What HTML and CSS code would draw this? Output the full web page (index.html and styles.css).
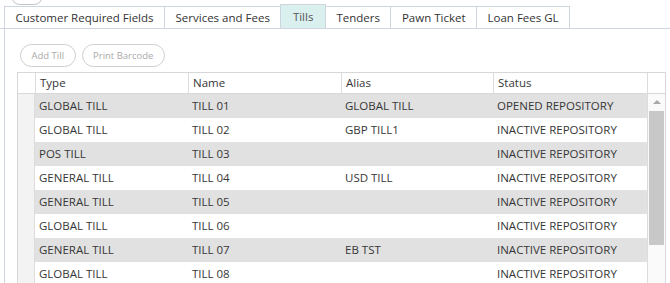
FILE: index.html
```html
<!DOCTYPE html>
<html lang="en">
<head>
    <meta charset="UTF-8">
    <meta name="viewport" content="width=device-width, initial-scale=1.0">
    <title>Tills</title>
    <link rel="stylesheet" href="styles.css">
</head>
<body>
    <div class="top-btn"></div>

    <div class="tabs">
        <div class="tab">Customer Required Fields</div>
        <div class="tab">Services and Fees</div>
        <div class="tab active">Tills</div>
        <div class="tab">Tenders</div>
        <div class="tab">Pawn Ticket</div>
        <div class="tab">Loan Fees GL</div>
    </div>

    <div class="panel">
        <div class="toolbar">
            <button class="pill" disabled>Add Till</button>
            <button class="pill" disabled>Print Barcode</button>
        </div>

        <div class="grid">
            <div class="grid-head">
                <div class="cell ind"></div>
                <div class="cell">Type</div>
                <div class="cell">Name</div>
                <div class="cell">Alias</div>
                <div class="cell">Status</div>
                <div class="cell corner"></div>
            </div>
            <div class="grid-body">
                <div class="rows">
                    <div class="row alt"><div class="ind"></div><div>GLOBAL TILL</div><div>TILL 01</div><div>GLOBAL TILL</div><div>OPENED REPOSITORY</div></div>
                    <div class="row"><div class="ind"></div><div>GLOBAL TILL</div><div>TILL 02</div><div>GBP TILL1</div><div>INACTIVE REPOSITORY</div></div>
                    <div class="row alt"><div class="ind"></div><div>POS TILL</div><div>TILL 03</div><div></div><div>INACTIVE REPOSITORY</div></div>
                    <div class="row"><div class="ind"></div><div>GENERAL TILL</div><div>TILL 04</div><div>USD TILL</div><div>INACTIVE REPOSITORY</div></div>
                    <div class="row alt"><div class="ind"></div><div>GENERAL TILL</div><div>TILL 05</div><div></div><div>INACTIVE REPOSITORY</div></div>
                    <div class="row"><div class="ind"></div><div>GLOBAL TILL</div><div>TILL 06</div><div></div><div>INACTIVE REPOSITORY</div></div>
                    <div class="row alt"><div class="ind"></div><div>GENERAL TILL</div><div>TILL 07</div><div>EB TST</div><div>INACTIVE REPOSITORY</div></div>
                    <div class="row"><div class="ind"></div><div>GLOBAL TILL</div><div>TILL 08</div><div></div><div>INACTIVE REPOSITORY</div></div>
                </div>
                <div class="vscroll">
                    <div class="arrow-up"></div>
                    <div class="thumb"></div>
                </div>
            </div>
        </div>
    </div>
</body>
</html>
```

FILE: styles.css
```css
html, body {
    height: 283px;
    overflow: hidden;
}

body {
    font-family: 'Open Sans', 'Noto Sans', sans-serif;
    font-size: 11.5px;
    color: #363636;
    background-color: #fff;
    margin: 0;
    padding: 0;
}

.top-btn {
    width: 30px;
    height: 20px;
    margin: -17px 0 0 11px;
    border: 1px solid #c4c4c4;
    border-radius: 9px;
}

.tabs {
    display: flex;
    align-items: flex-end;
    padding-left: 4px;
    height: 23px;
    border-bottom: 1px solid #cfd5de;
}

.tab {
    height: 21px;
    line-height: 21px;
    padding: 0 10.5px;
    border: 1px solid #cfd5de;
    border-bottom: none;
    margin-right: -1px;
    color: #333;
}

.tab.active {
    height: 23px;
    line-height: 24px;
    padding: 0 11.5px;
    background-color: #d9f0ef;
    color: #555;
}

.panel {
    margin-left: 4px;
    border-left: 1px solid #cfd5de;
    padding: 15px 0 0 12px;
}

.toolbar {
    display: flex;
    gap: 6px;
    margin-left: 3px;
    margin-bottom: 5px;
}

.pill {
    font-family: 'Open Sans', 'Noto Sans', sans-serif;
    font-size: 9.5px;
    height: 23px;
    padding: 0 10.5px;
    border: 1px solid #cfcfcf;
    border-radius: 12px;
    background-color: #fff;
    color: #aaa;
}

.grid {
    width: 647px;
    border: 1px solid #d8d8d8;
    border-bottom: none;
}

.grid-head {
    display: grid;
    grid-template-columns: 17px 153px 153px 152px 154px 18px;
    height: 20px;
    border-bottom: 1px solid #d8d8d8;
}

.grid-head .cell {
    line-height: 20px;
    padding-left: 4px;
    border-left: 1px solid #dcdcdc;
}

.grid-head .cell:first-child {
    border-left: none;
}

.grid-body {
    display: flex;
}

.rows {
    flex: 1;
}

.row {
    display: grid;
    grid-template-columns: 17px 153px 153px 152px 154px;
    height: 24px;
    line-height: 24px;
}

.row div {
    padding-left: 4px;
    white-space: nowrap;
}

.row.alt {
    background-color: #e1e1e1;
}

.row .ind {
    background-color: #f3f3f3;
    border-right: 1px solid #dcdcdc;
}

.vscroll {
    width: 18px;
    border-left: 1px solid #dcdcdc;
    background-color: #fafafa;
    display: flex;
    flex-direction: column;
    align-items: center;
}

.arrow-up {
    width: 0;
    height: 0;
    margin-top: 6px;
    border-left: 4px solid transparent;
    border-right: 4px solid transparent;
    border-bottom: 4px solid #a8a8a8;
}

.thumb {
    width: 15px;
    height: 134px;
    margin-top: 7px;
    background-color: #c8c8c8;
}
```
